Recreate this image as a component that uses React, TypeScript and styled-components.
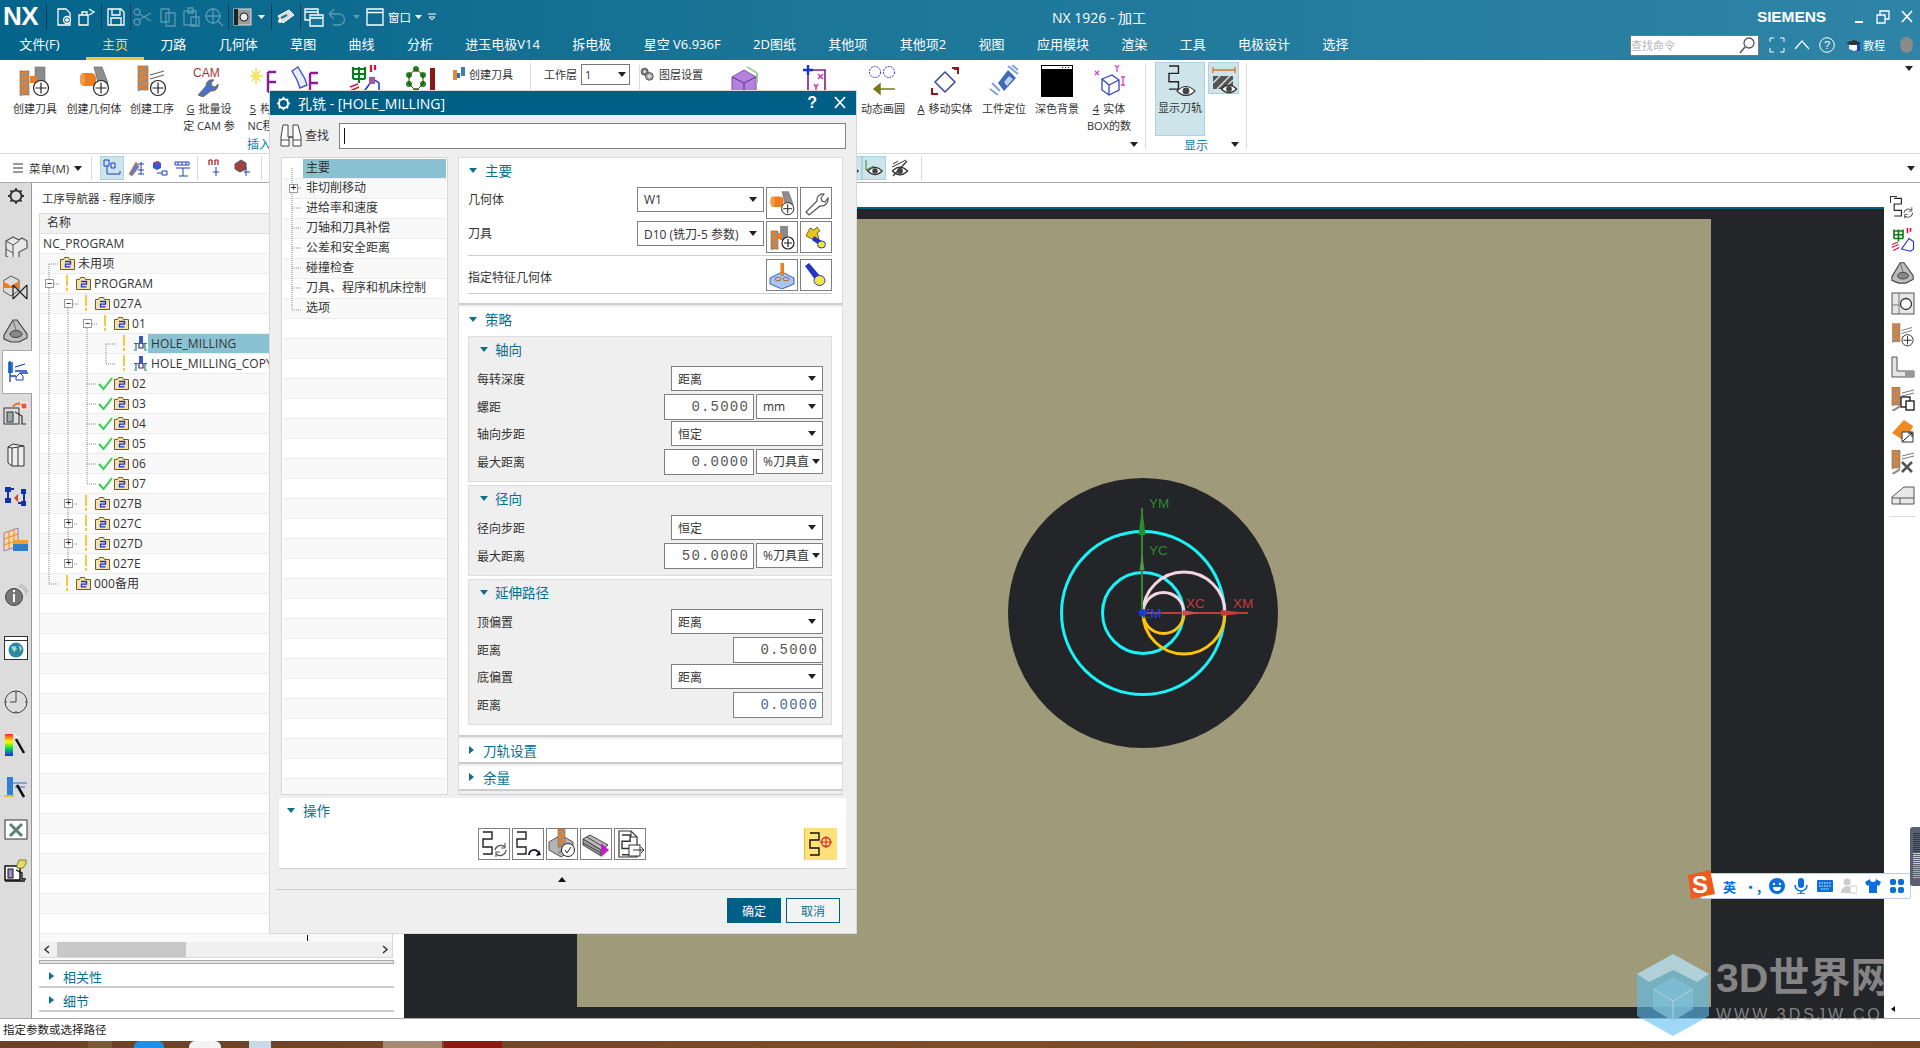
import React from 'react';
import styled, { createGlobalStyle } from 'styled-components';

const Global = createGlobalStyle`
  html, body { margin: 0; padding: 0; background: #fff; }
  body { font-family: "Open Sans", "Noto Sans CJK SC", sans-serif; font-size: 12px; color: #333; }
  * { box-sizing: border-box; }
`;

const TEAL = '#0c6f90';

/* ---------- drawing helpers ---------- */
type IP = { s?: number; w?: number; h?: number; vb?: string; children?: React.ReactNode };
const Ico = ({ s = 32, w, h, vb = '0 0 32 32', children }: IP) => (
  <svg width={w ?? s} height={h ?? s} viewBox={vb} style={{ display: 'block', flex: 'none' }} fill="none">{children}</svg>
);
const Drill = ({ x = 0, y = 4, h = 24, w = 11 }: { x?: number; y?: number; h?: number; w?: number }) => (
  <g>
    <rect x={x} y={y} width={w} height={h} fill="#e8802a" stroke="#8a5a30" strokeWidth=".6" />
    {[0, 1, 2, 3].map(i => (
      <path key={i} d={`M${x} ${y + 5 + i * 6}L${x + w} ${y + i * 6}v2.6L${x} ${y + 7.6 + i * 6}z`} fill="#8f8f8f" />
    ))}
  </g>
);
const Plus = ({ cx = 22, cy = 23, r = 7.5 }: { cx?: number; cy?: number; r?: number }) => (
  <g>
    <circle cx={cx} cy={cy} r={r} fill="#fff" stroke="#222" strokeWidth="1.2" />
    <path d={`M${cx - r + 2} ${cy}h${2 * r - 4}M${cx} ${cy - r + 2}v${2 * r - 4}`} stroke="#222" strokeWidth="1.2" />
  </g>
);
const Eye = ({ cx = 22, cy = 24, k = 1 }: { cx?: number; cy?: number; k?: number }) => (
  <g>
    <path d={`M${cx - 9 * k} ${cy}Q${cx} ${cy - 9 * k} ${cx + 9 * k} ${cy}Q${cx} ${cy + 9 * k} ${cx - 9 * k} ${cy}z`} fill="#fff" stroke="#333" strokeWidth="1.1" />
    <circle cx={cx} cy={cy} r={3.4 * k} fill="#444" />
  </g>
);
const Wave = ({ x = 4, y = 3, k = 1, c = '#222' }: { x?: number; y?: number; k?: number; c?: string }) => (
  <path d={`M${x} ${y}h${9 * k}v${7 * k}h-${9 * k}v${8 * k}h${9 * k}v${7 * k}h-${9 * k}`} stroke={c} strokeWidth="1.4" />
);
const E = ({ x = 16, y = 6, c = '#8d1c97' }: { x?: number; y?: number; c?: string }) => (
  <path d={`M${x} ${y}v20M${x} ${y}h8M${x} ${y + 10}h8M${x} ${y + 20}h8`} stroke={c} strokeWidth="2.4" />
);
const Geo = ({ p = false }: { p?: boolean }) => (
  <>
    <path d="M16 2l8 0 6 16-8 8z" fill="#8e8e8e" stroke="#555" strokeWidth=".6" />
    <rect x="2" y="8" width="16" height="13" rx="5" fill="#ed7d22" />
    <ellipse cx="4.5" cy="14.5" rx="2.6" ry="6.4" fill="#f59a45" />
    {p && <Plus cx={23} cy={23} />}
  </>
);

const FolderIco = () => (
  <Ico s={15} vb="0 0 15 15">
    <path d="M.5 3.5h3l1-2h4l1 2h5v10H.5z" fill="#f5e3a8" stroke="#6f5c1e" />
    <path d="M5 5.5h5.5v2.7H5.5v2.6h5" stroke="#1a2ee6" strokeWidth="1.3" />
  </Ico>
);
const OpIco = () => (
  <Ico s={15} vb="0 0 15 15">
    <rect x="6" y="0" width="4" height="7" fill="#3c55c8" />
    <path d="M1 7.5h13M3 8v5M12 8v5M1 14h3M11 14h3" stroke="#1b7d78" strokeWidth="1.2" />
    <path d="M6 8v4h4V8" stroke="#22306f" strokeWidth="1.2" />
  </Ico>
);
const Check = () => (
  <Ico s={15} vb="0 0 15 15"><path d="M1 8l4.5 5L14 2" stroke="#2fd24c" strokeWidth="2" /></Ico>
);
const Caret = () => <Ico w={8} h={5} vb="0 0 8 5"><path d="M0 0h8L4 5z" fill="#222" /></Ico>;
const CaretW = () => <Ico w={7} h={4} vb="0 0 7 4"><path d="M0 0h7L3.500 4z" fill="#fff" /></Ico>;

/* ---------- ribbon and strip icons ---------- */
const ic: Record<string, React.ReactNode> = {
  tool: <Ico><Drill x={1} y={6} h={24} w={9} /><path d="M16 2h10v18H16z" fill="#8b8b8b" stroke="#666" strokeWidth=".6" /><rect x="11" y="11" width="7" height="7" fill="#ed7d22" /><Plus cx={22} cy={23} /></Ico>,
  geom: <Ico><Geo p /></Ico>,
  oper: <Ico><Drill x={2} y={1} h={24} w={10} /><path d="M14 10l14-4M14 14l14-4M15 18h13" stroke="#666" strokeWidth="1.1" /><Plus cx={22} cy={23} /></Ico>,
  cam: <Ico><text x="0" y="12" fontFamily="Liberation Sans" fontSize="12" fill="#a33">CAM</text><path d="M5 30l8-9a6 6 0 0 1 8-6l-3 3 1 3 3 1 3-3a6 6 0 0 1-7 7l-8 6z" fill="#4b6ec9" stroke="#7a6a1e" strokeWidth=".8" /></Ico>,
  sun: <Ico><path d="M6 3v16M0 11h13M2 6l8 10M10 6l-8 10" stroke="#eedc55" strokeWidth="1.5" /><circle cx="6" cy="11" r="3" fill="#f5e65c" /><E x={18} y={7} /></Ico>,
  hand: <Ico><path d="M2 6l6-4 7 12 2 6-7 3-3-8z" fill="#e9edfa" stroke="#3d55c9" strokeWidth="1.4" /><E x={20} y={8} /></Ico>,
  tree: <Ico><path d="M4 4h12M4 9h12M4 14h12M10 2v16M4 2v12M16 2v12" stroke="#0b7d1b" strokeWidth="2.2" /><path d="M22 0v7M26 0v5" stroke="#d6113a" strokeWidth="2.2" /><path d="M1 22l8-3M1 26l9-4M3 30l8-4" stroke="#d6113a" strokeWidth="1.5" /><path d="M14 28l10-14 6 4v10l-4 3z" fill="#fff" stroke="#1630d8" strokeWidth="1.5" /><rect x="20" y="12" width="6" height="7" fill="#a2589c" /></Ico>,
  ring: <Ico><g fill="#1d8a22"><circle cx="10" cy="4" r="3" /><circle cx="3" cy="10" r="3" /><circle cx="17" cy="10" r="3" /><circle cx="3" cy="19" r="3" /><circle cx="17" cy="19" r="3" /><circle cx="10" cy="26" r="3" /></g><path d="M10 4L3 10v9l7 7 7-7v-9z" stroke="#4a2f0f" /><rect x="24" y="3" width="5" height="26" fill="#8b1717" /></Ico>,
  cube: <Ico><path d="M3 12l12-7 12 7v14l-12 7-12-7z" fill="#b482dd" stroke="#7c4ab2" /><path d="M3 12l12 6 12-6M15 18v14" stroke="#5d2f93" /><path d="M18 2l10 6M28 8v10" stroke="#9fc99a" strokeWidth="2" /></Ico>,
  frame: <Ico><path d="M8 5h17v24M8 5v24" stroke="#7d1d8a" strokeWidth="1.6" /><path d="M3 5h10M8 0v10" stroke="#1730d8" strokeWidth="2.4" /><path d="M18 9l5 5M23 9l-5 5" stroke="#cc35c0" strokeWidth="1.5" /><path d="M14 19l2 3 2-3M16 22v5" stroke="#cc35c0" strokeWidth="1.5" /></Ico>,
  dyn: <Ico><circle cx="8" cy="7" r="5.500" stroke="#2a2ae0" strokeDasharray="2 1" /><circle cx="22" cy="7" r="5.500" stroke="#2a2ae0" strokeDasharray="2 1" /><path d="M28 24H7M13 19l-6 5 6 5z" fill="#7c7a17" stroke="#7c7a17" strokeWidth="1.500" /></Ico>,
  move: <Ico><path d="M6 17L16 7l10 10-10 10z" fill="#fff" stroke="#3f4ca8" strokeWidth="1.6" strokeLinejoin="round" /><path d="M23 3h6v6M25 4l3 0M3 23v6h6" stroke="#8b1a1a" strokeWidth="2" /></Ico>,
  pos: <Ico><path d="M10 18L20 5l8 8-12 13z" fill="#3d69b5" /><path d="M16 17l5-6 4 3-6 7z" fill="#bcd0f0" /><path d="M2 24l8 6M4 18l8 8M20 1l10 8M24 0l6 5" stroke="#7ea4e0" strokeWidth="2" /></Ico>,
  dark: <Ico><rect x="0" y="0" width="32" height="32" fill="#000" /><rect x=".5" y=".5" width="31" height="4" fill="#fff" stroke="#000" /><path d="M24 2.500h1M27 2.500h1M21 2.500h1" stroke="#000" /></Ico>,
  box: <Ico><path d="M9 14l10-4 7 5v10l-10 5-7-5z" stroke="#3147c4" strokeWidth="1.3" fill="#fff" /><path d="M9 14l7 6 10-5M16 20v10" stroke="#3147c4" strokeWidth="1.3" /><path d="M2 6l4 4M6 6l-4 4M22 0l2 3 2-3M24 3v4M28 12h4M30 12v8M28 20h4" stroke="#e03fcc" strokeWidth="1.300" /></Ico>,
  path: <Ico w={34} h={34} vb="0 0 34 34"><Wave x={6} y={1} k={1.05} /><Eye cx={23} cy={26} k={1} /></Ico>,
  hatch: <Ico w={30} h={30} vb="0 0 30 30"><path d="M4 5h22M4 2v6M26 2v6" stroke="#e0722a" strokeWidth="1.300" /><rect x="4" y="11" width="20" height="13" fill="#555" /><path d="M4 18l7-7M8 24l13-13M15 24l9-9" stroke="#ddd" strokeWidth="1.500" /><Eye cx={20} cy={24} k={.85} /></Ico>,
  gears: <Ico s={14} vb="0 0 18 18"><circle cx="6" cy="6" r="4.500" fill="#888" stroke="#333" /><circle cx="6" cy="6" r="1.500" fill="#eee" /><circle cx="12" cy="12" r="5" fill="#aaa" stroke="#333" /><circle cx="12" cy="12" r="1.700" fill="#eee" /></Ico>,
  miniTool: <Ico s={14} vb="0 0 14 14"><rect x="1" y="3" width="4" height="10" fill="#e28b2e" /><rect x="5" y="6" width="3" height="5" fill="#2a6dc9" /><rect x="9" y="0" width="4" height="9" fill="#3c7fa8" /></Ico>,

  gear: <Ico s={18} vb="0 0 18 18"><circle cx="9" cy="9" r="5.500" stroke="#333" strokeWidth="2" /><path d="M9 1v3M9 14v3M1 9h3M14 9h3M3.500 3.500l2 2M12.500 12.500l2 2M3.500 14.500l2-2M12.500 5.500l2-2" stroke="#333" strokeWidth="1.800" /></Ico>,
  blocks: <Ico s={24} vb="0 0 24 24"><path d="M2 8l7-4 6 3 3-2 5 3v7l-8 4v5l-6 3-7-4z" fill="#e8e8e8" stroke="#555" strokeWidth="1.200" /><path d="M2 8l7 4 6-4M9 12v14M2 16l7 4" stroke="#555" /></Ico>,
  mcs: <Ico s={26} vb="0 0 26 26"><path d="M0 6l8-5 8 4v10l-8 6-8-5z" fill="#ddd" stroke="#555" /><path d="M0 6l8 5 8-5v7H0z" fill="#ed7d22" /><path d="M10 10l14 14M24 10L10 24M10 10v14M24 10v14" stroke="#222" fill="#fff" strokeWidth="1.200" /></Ico>,
  part: <Ico s={26} vb="0 0 26 26"><path d="M1 18l9-15h4l10 14v4l-8 4H8l-7-3z" fill="#bdbdbd" stroke="#444" strokeWidth="1.200" /><ellipse cx="13" cy="17" rx="6" ry="3.500" fill="#888" stroke="#444" /><path d="M10 3l3 10" stroke="#666" /></Ico>,
  nav: <Ico s={22} vb="0 0 22 22"><rect x="1" y="1" width="5" height="11" fill="#2f7ed8" /><path d="M3 0v21M3 15h6M8 6l10-3M8 10h12M13 12h8" stroke="#1a3ebd" strokeWidth="1.300" /><path d="M9 16l4-4 3 3v4H9z" stroke="#1a3ebd" /></Ico>,
  machine: <Ico s={26} vb="0 0 26 26"><rect x="1" y="6" width="15" height="16" fill="#ddd" stroke="#333" /><rect x="4" y="10" width="6" height="10" fill="#9aa" stroke="#333" /><path d="M12 10l7 4v8h4" stroke="#333" strokeWidth="1.200" /><path d="M10 5a6 6 0 0 1 8-3" stroke="#e0722a" strokeWidth="2" /><rect x="18" y="1" width="6" height="6" fill="#e53" stroke="#fff" /></Ico>,
  book: <Ico w={18} h={24} vb="0 0 18 24"><path d="M1 4l5-3 11 2v20H5l-4-3z" fill="#eee" stroke="#333" /><path d="M5 5v18M1 4l4 1 12-2" stroke="#333" /><path d="M11 4v19" stroke="#333" /></Ico>,
  seq: <Ico s={24} vb="0 0 24 24"><path d="M4 3v10M4 3h6M20 3v14M14 17h6" stroke="#1432a8" strokeWidth="2" /><rect x="1" y="1" width="6" height="5" fill="#1432a8" /><rect x="1" y="12" width="6" height="5" fill="#1432a8" /><rect x="17" y="3" width="5" height="5" fill="#1432a8" /><rect x="17" y="15" width="5" height="5" fill="#1432a8" /><path d="M10 12l4-4v8z" fill="#d44527" /></Ico>,
  table: <Ico s={26} vb="0 0 26 26"><path d="M1 6l14-5v18L1 24z" fill="#f6d9a9" stroke="#9a7bc0" /><path d="M1 12l14-5M1 18l14-5M6 4v18M11 2v18" stroke="#e88a2a" /><rect x="10" y="13" width="15" height="11" fill="#f0a030" /><rect x="10" y="17" width="15" height="7" fill="#2d7fc8" /></Ico>,
  info: <Ico s={24} vb="0 0 24 24"><circle cx="10" cy="14" r="8.500" fill="#777" stroke="#444" /><path d="M10 11v8" stroke="#fff" strokeWidth="2" /><circle cx="10" cy="8" r="1.200" fill="#fff" /><path d="M14 3a12 12 0 0 1 9 9M16 1a14 14 0 0 1 8 8" stroke="#aaa" /></Ico>,
  globe: <Ico s={24} vb="0 0 24 24"><rect x=".5" y=".5" width="23" height="23" fill="#fff" stroke="#333" /><path d="M1 4.500h22" stroke="#333" /><circle cx="12" cy="14" r="7.500" fill="#2d8aa5" /><path d="M7 11l4-1 2 3-3 3zM15 9l3 3-2 4z" fill="#a9d9c8" /></Ico>,
  clock: <Ico s={24} vb="0 0 24 24"><circle cx="12" cy="12" r="11" stroke="#444" /><path d="M12 3v9H6M12 1v2M12 21v2M1 12h2M21 12h2" stroke="#444" /></Ico>,
  rainbow: <Ico s={24} vb="0 0 24 24"><defs><linearGradient id="rb" x1="0" y1="0" x2="0" y2="1"><stop offset="0" stopColor="#f22" /><stop offset=".35" stopColor="#ff0" /><stop offset=".65" stopColor="#0d4" /><stop offset="1" stopColor="#22f" /></linearGradient></defs><rect x="1" y="1" width="8" height="22" fill="url(#rb)" /><path d="M12 6l8 14" stroke="#111" strokeWidth="2.500" /><path d="M11 1l2 4 3-2" stroke="#fff" /></Ico>,
  toolSel: <Ico s={24} vb="0 0 24 24"><rect x="3" y="2" width="6" height="18" fill="#2f7ed8" /><path d="M9 8h14M11 12h10" stroke="#2d62d8" strokeWidth="1.200" /><path d="M13 10l7 12" stroke="#111" strokeWidth="2.500" /><path d="M0 21h10" stroke="#d8c23c" strokeWidth="2" /></Ico>,
  wrenchBox: <Ico s={24} vb="0 0 24 24"><rect x="1" y="3" width="22" height="19" fill="#fff" stroke="#333" /><path d="M6 7l12 12M18 7L6 19" stroke="#5f7f77" strokeWidth="3" /></Ico>,
  machineFolder: <Ico s={24} vb="0 0 24 24"><rect x="1" y="8" width="15" height="14" fill="#fff" stroke="#111" strokeWidth="1.500" /><rect x="4" y="11" width="5" height="9" fill="#9c8cc0" stroke="#111" /><path d="M12 12l6 3v6h4M1 23h20" stroke="#111" strokeWidth="1.300" /><path d="M13 7l2-5h7v4l-3 4h-6z" fill="#e8d76a" stroke="#7b8a22" /></Ico>,

  reload: <Ico s={30} vb="0 0 30 30"><Wave x={4} y={3} k={1} /><path d="M16 21a6 6 0 0 1 10-3M27 21a6 6 0 0 1-10 4" stroke="#555" strokeWidth="1.300" /><path d="M26 14v5h-4M17 28v-5h4" stroke="#555" strokeWidth="1.100" /></Ico>,
  replay: <Ico s={30} vb="0 0 30 30"><Wave x={4} y={3} k={1} /><path d="M16 26a5 5 0 0 1 9-3" stroke="#112" strokeWidth="1.700" /><path d="M23 27l5-1-2-5z" fill="#112" /></Ico>,
  verify: <Ico s={30} vb="0 0 30 30"><path d="M2 13l12-7 12 7v8l-12 7-12-7z" fill="#b4b4b4" stroke="#555" /><Drill x={11} y={0} h={18} w={7} /><circle cx="21" cy="21" r="6.500" fill="#fff" stroke="#222" /><path d="M18 21l2 3 4-6" stroke="#222" /></Ico>,
  post: <Ico s={30} vb="0 0 30 30"><path d="M2 10l7-4 18 10-7 5z" fill="#bbb" stroke="#444" /><path d="M2 10v6l18 11v-6zM6 8l18 11M2 14l18 10" stroke="#444" fill="#999" /><path d="M20 14l8 7-8 7z" fill="#c31fc6" /></Ico>,
  docOut: <Ico s={30} vb="0 0 30 30"><path d="M4 2h12l6 6v20H4z" fill="#fff" stroke="#333" strokeWidth="1.200" /><path d="M16 2v6h6" stroke="#333" /><Wave x={7} y={6} k={.9} c="#333" /><rect x="14" y="16" width="11" height="11" fill="#fff" stroke="#333" /><path d="M18 21h11M26 18l3 3-3 3" stroke="#333" /></Ico>,
  target: <Ico s={26} vb="0 0 26 26"><Wave x={2} y={2} k={1} c="#111" /><circle cx="18" cy="11" r="4.500" stroke="#d8242a" strokeWidth="1.300" /><path d="M12 11h12M18 5v12" stroke="#d8242a" /></Ico>,
  wrench: <Ico s={26} vb="0 0 26 26"><path d="M3 22l11-11a6 6 0 0 1 7-7l-3 4 1 3 3 1 3-4a7 7 0 0 1-8 8L6 25z" fill="#fff" stroke="#555" strokeWidth="1.200" /></Ico>,
  tool2: <Ico s={26} vb="0 0 26 26"><Drill x={2} y={7} h={18} w={7} /><rect x="11" y="2" width="8" height="14" fill="#8b8b8b" /><rect x="9" y="9" width="4" height="6" fill="#ed7d22" /><Plus cx={19} cy={19} r={6} /></Ico>,
  lightKey: <Ico s={26} vb="0 0 26 26"><path d="M3 12l4-8 4 2 3-3 3 4-3 2 2 5-5 2z" fill="#e9c61d" stroke="#5b4d12" strokeWidth=".800" /><path d="M11 12l8 5-3 4-7-5z" fill="#2434c8" /><ellipse cx="18.500" cy="20.500" rx="4" ry="3.500" fill="#f1e447" stroke="#2434c8" /></Ico>,
  feature: <Ico s={28} vb="0 0 28 28"><path d="M2 17l12-6 12 6v6l-12 5-12-5z" fill="#a9c4ee" stroke="#3a62b8" /><ellipse cx="10" cy="18" rx="3" ry="1.800" stroke="#c0651c" /><ellipse cx="18" cy="18" rx="3" ry="1.800" stroke="#c0651c" /><rect x="12.500" y="2" width="3.500" height="13" fill="#ed7d22" /></Ico>,
  torch: <Ico s={26} vb="0 0 26 26"><path d="M2 4l4-3 12 14-5 4z" fill="#2434c8" /><ellipse cx="16.500" cy="18.500" rx="5.500" ry="5" fill="#f1e447" stroke="#2434c8" /></Ico>,
  r_green: <Ico s={24} vb="0 0 32 32"><path d="M4 4h12M4 9h12M4 14h12M10 2v16M4 2v12M16 2v12" stroke="#0b7d1b" strokeWidth="2.200" /><path d="M22 0v7M26 0v5" stroke="#d6113a" strokeWidth="2.200" /><path d="M1 22l8-3M1 26l9-4M3 30l8-4" stroke="#d6113a" strokeWidth="1.500" /><path d="M14 28l10-14 6 4v10l-4 3z" fill="#fff" stroke="#1630d8" strokeWidth="1.500" /></Ico>,
  r_bracket: <Ico s={24} vb="0 0 24 24"><rect x="1" y="2" width="22" height="21" fill="#e6e6e6" stroke="#555" /><path d="M8 2v21M1 14h7" stroke="#777" /><circle cx="15" cy="13" r="5.500" fill="#fff" stroke="#333" strokeWidth="1.300" /></Ico>,
  r_ell: <Ico s={24} vb="0 0 24 24"><path d="M1 2h5v14h17v6H1z" fill="#e4e4e4" stroke="#555" /><rect x="14" y="16" width="9" height="6" fill="#999" /></Ico>,
  r_copy: <Ico s={24} vb="0 0 24 24"><Drill x={1} y={0} h={18} w={8} /><path d="M11 6l12-3M11 9l12-3" stroke="#777" /><rect x="10" y="10" width="9" height="10" fill="#fff" stroke="#111" strokeWidth="1.300" /><rect x="15" y="14" width="8" height="9" fill="#fff" stroke="#111" strokeWidth="1.300" /></Ico>,
  r_fan: <Ico s={24} vb="0 0 24 24"><path d="M1 14L13 1l9 6-7 16z" fill="#ee8a20" /><path d="M11 13h11v10H11z" fill="#fff" stroke="#333" /><path d="M12 22l9-8M17 14h4v4" stroke="#111" /></Ico>,
  r_del: <Ico s={24} vb="0 0 24 24"><Drill x={1} y={0} h={18} w={8} /><path d="M11 6l12-3M11 9l12-3" stroke="#777" /><path d="M11 12l10 10M21 12L11 22" stroke="#555" strokeWidth="2.600" /></Ico>,
  r_wedge: <Ico s={24} vb="0 0 24 24"><path d="M1 15L13 5h10v17H1z" fill="#e8e8e8" stroke="#555" /><path d="M1 16h22M9 16v6" stroke="#555" /></Ico>,
  viewEye: <Ico s={20} vb="0 0 20 20"><path d="M2 2v10M2 12l8-4" stroke="#2a8a3c" /><path d="M2 12h9" stroke="#d22" /><Eye cx={11} cy={13} k={.8} /></Ico>,
  viewNo: <Ico s={20} vb="0 0 20 20"><Eye cx={10} cy={13} k={.85} /><path d="M3 6l5-3M2 9l14-7" stroke="#333" /><path d="M3 18L17 3" stroke="#333" strokeWidth="1.200" /></Ico>,
  sub1: <Ico s={18} vb="0 0 18 18"><path d="M1 1h5v6H1zM8 4h4v5H8z" stroke="#1a3ebd" /><path d="M4 7v8h8M12 15h5v-3" stroke="#1a3ebd" /></Ico>,
  sub2: <Ico s={18} vb="0 0 18 18"><path d="M1 15L8 3l3 5-7 9z" fill="#5b7fd0" stroke="#e0872a" /><path d="M13 3v12M10 5h6M10 11h6M10 15h6" stroke="#1a3ebd" /></Ico>,
  sub3: <Ico s={18} vb="0 0 18 18"><path d="M2 4l4-2 4 2v5l-4 2-4-2z" fill="#3854d8" /><path d="M3 3l3 2 2-3" stroke="#e33" /><path d="M11 12h5v4h-5z" stroke="#1a3ebd" /><path d="M11 14H6" stroke="#1a3ebd" /></Ico>,
  sub4: <Ico s={18} vb="0 0 18 18"><path d="M1 3h14M1 3v3h14V3M4 3v3M8 3v3M12 3v3" stroke="#1a3ebd" /><path d="M2 9h14M9 9v8M5 17h9" stroke="#1a3ebd" /></Ico>,
  sub5: <Ico s={18} vb="0 0 18 18"><path d="M1 1v5M4 1v5M7 1v5M10 1v5M1 1h3M7 1h3" stroke="#a81414" strokeWidth="1.200" /><path d="M8 8v9M5 13h6" stroke="#1a3ebd" /></Ico>,
  sub6: <Ico s={18} vb="0 0 18 18"><path d="M1 5l6-4 5 3v6l-6 3-5-3z" fill="#a14242" stroke="#555" /><path d="M12 8v9M10 13h6" stroke="#1a3ebd" /></Ico>,
};

/* ---------- shell ---------- */
const Page = styled.div`
  position: relative;
  width: 1920px;
  height: 1048px;
  overflow: hidden;
  display: flex;
  flex-direction: column;
  background: #fff;
`;
const Header = styled.header`
  height: 60px;
  flex: none;
  background: linear-gradient(90deg, #04648a 0%, #1a7597 40%, #2e84a6 100%);
  color: #fff;
`;
const TitleBar = styled.div`
  height: 33px;
  display: flex;
  align-items: center;
`;
const Logo = styled.div`
  width: 46px;
  padding-left: 3px;
  font: bold 26px "Liberation Sans", sans-serif;
  letter-spacing: -.5px;
`;
const QSep = styled.i<{ $ml?: number }>`
  width: 1px;
  height: 26px;
  margin-left: ${p => p.$ml ?? 0}px;
  background: rgba(0, 30, 50, .55);
`;
const QItem = styled.span<{ $ml: number; $dim?: boolean }>`
  margin-left: ${p => p.$ml}px;
  opacity: ${p => (p.$dim ? 0.32 : 1)};
  display: flex;
  align-items: center;
  font-size: 11.5px;
`;
const AppTitle = styled.div`
  margin-left: 616px;
  width: 110px;
  font-size: 14px;
  white-space: nowrap;
`;
const Brand = styled.div`
  margin-left: auto;
  font: bold 15.5px "Liberation Sans", sans-serif;
  letter-spacing: -.1px;
`;
const WinBtns = styled.div`
  display: flex;
  align-items: center;
  gap: 10px;
  margin: 0 6px 0 26px;
`;
const MenuBar = styled.nav`
  height: 27px;
  display: flex;
  align-items: stretch;
  padding-left: 3px;
  font-size: 13px;
`;
const MenuTab = styled.div<{ $active?: boolean; $mr?: number }>`
  padding: 0 16.2px;
  margin-right: ${p => p.$mr ?? 0}px;
  white-space: nowrap;
  line-height: 23px;
  color: ${p => (p.$active ? '#ffd75e' : '#fff')};
  border-bottom: 3px solid ${p => (p.$active ? '#f3c33a' : 'transparent')};
`;
const MenuRight = styled.div`
  margin-left: auto;
  display: flex;
  align-items: center;
  padding-right: 7px;
  height: 24px;
`;
const CmdSearch = styled.div`
  width: 129px;
  height: 21px;
  background: #fff;
  border: 1px solid #777;
  display: flex;
  align-items: center;
  justify-content: space-between;
  padding-right: 2px;
  color: #b5b5b5;
  font-size: 11px;
`;
const MenuIco = styled.span<{ $ml: number }>`
  margin-left: ${p => p.$ml}px;
  display: flex;
  align-items: center;
  font-size: 11px;
  gap: 2px;
`;
const Dot = styled.i`
  width: 13px;
  height: 16px;
  border-radius: 50%;
  background: #8a8a8a;
  margin-left: 15px;
`;

const Ribbon = styled.section`
  height: 94px;
  flex: none;
  display: flex;
  border-bottom: 1px solid #d8d8d8;
  font-size: 11px;
`;
const RGroup = styled.div<{ $w: number }>`
  width: ${p => p.$w}px;
  flex: none;
  display: flex;
  flex-direction: column;
  position: relative;
  margin: 2px 0 0;
`;
const RItems = styled.div<{ $pl?: number }>`
  display: flex;
  height: 74px;
  padding-left: ${p => p.$pl ?? 0}px;
`;
const RFooter = styled.div<{ $pr?: number }>`
  flex: 1;
  display: flex;
  align-items: center;
  justify-content: center;
  padding-right: ${p => p.$pr ?? 0}px;
  color: #0c7ea6;
  font-size: 12px;
  position: relative;
`;
const FootArrow = styled.span`
  position: absolute;
  right: 7px;
  top: 6px;
  display: flex;
`;
const RCol = styled.div<{ $w: number }>`
  width: ${p => p.$w}px;
  flex: none;
  display: flex;
  flex-direction: column;
  align-items: center;
  padding-top: 3px;
  text-align: center;
  white-space: nowrap;
`;
const RLabel = styled.div`
  margin-top: 3px;
  line-height: 17px;
  height: 34px;
  color: #333;
`;
const U = styled.span`
  text-decoration: underline;
  margin-right: 4px;
`;
const RSep = styled.i<{ $h?: number; $ml?: number }>`
  width: 1px;
  height: ${p => p.$h ?? 86}px;
  margin: 3px 0 0 ${p => p.$ml ?? 0}px;
  background: #dcdcdc;
  flex: none;
`;
const RSmall = styled.div<{ $ml: number; $gap?: number }>`
  margin: 1px 0 0 ${p => p.$ml}px;
  height: 22px;
  display: flex;
  align-items: center;
  gap: ${p => p.$gap ?? 3}px;
  white-space: nowrap;
  flex: none;
`;
const LayerBox = styled.div`
  width: 49px;
  height: 21px;
  border: 1px solid #777;
  margin-left: 1px;
  padding: 0 3px;
  display: flex;
  align-items: center;
  justify-content: space-between;
`;
const RActive = styled.div<{ $h: number; $w: number; $ml: number }>`
  width: ${p => p.$w}px;
  height: ${p => p.$h}px;
  margin: 0 0 0 ${p => p.$ml}px;
  background: #cde5ea;
  border: 1px solid #aad3dd;
  display: flex;
  flex-direction: column;
  align-items: center;
  justify-content: flex-start;
  padding-top: 2px;
  white-space: nowrap;
  flex: none;
`;

const SubBar = styled.section`
  height: 29px;
  flex: none;
  display: flex;
  align-items: center;
  border-bottom: 1px solid #aaa;
  padding-right: 5px;
  font-size: 11.5px;
`;
const SItem = styled.span<{ $ml: number; $on?: boolean }>`
  margin-left: ${p => p.$ml}px;
  display: flex;
  align-items: center;
  justify-content: center;
  ${p => p.$on && 'background:#cde5ea; outline:1px solid #aad3dd; height:22px; width:22px;'}
`;
const SSep = styled.i<{ $ml: number }>`
  margin-left: ${p => p.$ml}px;
  width: 1px;
  height: 24px;
  background: #d8d8d8;
`;
const SpaceFill = styled.i`
  flex: 1;
`;

const Main = styled.main`
  flex: 1;
  min-height: 0;
  display: flex;
`;
const Strip = styled.aside`
  width: 32px;
  flex: none;
  background: #dcdcdc;
  border-right: 1px solid #999;
  display: flex;
  flex-direction: column;
`;
const StripCell = styled.div<{ $gap: number; $h: number; $on?: boolean }>`
  margin-top: ${p => p.$gap}px;
  height: ${p => p.$h}px;
  flex: none;
  display: flex;
  align-items: center;
  justify-content: center;
  ${p => p.$on && 'background:#fff; margin-left:2px; margin-right:-1px; border:1px solid #aaa; border-right:0;'}
`;
const NavPanel = styled.div`
  width: 372px;
  flex: none;
  display: flex;
  flex-direction: column;
  padding-left: 7px;
`;
const NavTitle = styled.div`
  height: 30px;
  flex: none;
  padding: 8px 0 0 3px;
  font-size: 11.5px;
  line-height: 15px;
`;
const NavTable = styled.div`
  width: 354px;
  height: 745px;
  flex: none;
  border: 1px solid #d8d8d8;
  display: flex;
  flex-direction: column;
  position: relative;
`;
const THead = styled.div`
  height: 20px;
  flex: none;
  padding-left: 7px;
  line-height: 18px;
  background: #f1f1f1;
  border-bottom: 1px solid #e0e0e0;
  font-size: 12px;
`;
const TBody = styled.div`
  height: 708px;
  flex: none;
  overflow: hidden;
  position: relative;
`;
const TreeLines = styled.svg`
  position: absolute;
  left: 0;
  top: 0;
  width: 352px;
  height: 400px;
  z-index: 1;
  pointer-events: none;
`;
const Row = styled.div<{ $alt: boolean; $pad?: number }>`
  height: 20px;
  display: flex;
  align-items: center;
  padding: 0 0 1px ${p => p.$pad ?? 0}px;
  background: ${p => (p.$alt ? '#f9f9f9' : '#fff')};
  border-bottom: 1px solid #ececec;
  white-space: nowrap;
  font-size: 12px;
`;
const ExpSlot = styled.span`
  width: 15px;
  flex: none;
  display: flex;
`;
const ExpBox = styled.span`
  width: 9px;
  height: 9px;
  border: 1px solid #9a9a9a;
  background: #fff;
  position: relative;
  z-index: 2;
  font: 10px/7px "Liberation Mono", monospace;
  text-align: center;
  color: #111;
`;
const StatusSlot = styled.span`
  width: 14px;
  flex: none;
  margin-right: 2px;
  display: flex;
  justify-content: center;
  position: relative;
  z-index: 2;
`;
const Warn = styled.i`
  width: 2px;
  height: 16px;
  background: linear-gradient(#f9c63f 0 11px, transparent 11px 13px, #f9c63f 13px);
`;
const RowLabel = styled.span<{ $sel?: boolean }>`
  flex: 1;
  padding-left: 3px;
  line-height: 19px;
  letter-spacing: .1px;
  color: #333;
  background: ${p => (p.$sel ? '#8bc2d3' : 'transparent')};
`;
const Tick = styled.i`
  position: absolute;
  left: 267px;
  top: 701px;
  width: 1px;
  height: 6px;
  background: #111;
`;
const ScrollBar = styled.div`
  height: 15px;
  flex: none;
  display: flex;
  align-items: center;
  justify-content: space-between;
  background: #f0f0f0;
  position: relative;
`;
const Thumb = styled.i`
  position: absolute;
  left: 17px;
  top: 0;
  width: 129px;
  height: 15px;
  background: #c8c8c8;
`;
const GrayBar = styled.div`
  width: 355px;
  height: 4px;
  margin-top: 2px;
  background: #e4e4e4;
  border: 1px solid #aaa;
  flex: none;
`;
const FootSec = styled.div`
  width: 355px;
  height: 24px;
  flex: none;
  display: flex;
  align-items: center;
  gap: 9px;
  padding: 2px 0 0 10px;
  color: ${TEAL};
  font-size: 13px;
  border-bottom: 2px solid #ccc;
`;
const Tri = styled.i`
  width: 0;
  height: 0;
  border-top: 4.5px solid transparent;
  border-bottom: 4.5px solid transparent;
  border-left: 5px solid ${TEAL};
  flex: none;
`;
const TriD = styled.i`
  width: 0;
  height: 0;
  border-left: 4.5px solid transparent;
  border-right: 4.5px solid transparent;
  border-top: 5px solid ${TEAL};
  flex: none;
`;

const View = styled.div`
  flex: 1;
  min-width: 0;
  display: flex;
  flex-direction: column;
`;
const ViewTop = styled.div`
  height: 24px;
  flex: none;
  border-bottom: 2px solid #005f87;
  box-sizing: content-box;
`;
const Dark = styled.div`
  flex: 1;
  background: #242529;
  padding: 10px 173px 11px 173px;
  display: flex;
`;
const Sheet = styled.div`
  flex: 1;
  background: #9f9a79;
  position: relative;
`;
const SceneSvg = styled.svg`
  position: absolute;
  left: 0;
  top: 0;
  width: 100%;
  height: 100%;
`;
const RightBar = styled.aside`
  width: 36px;
  flex: none;
  display: flex;
  flex-direction: column;
  align-items: center;
  padding: 13px 0 0 1px;
  gap: 7.800px;
  position: relative;
`;
const RightRule = styled.i`
  width: 27px;
  height: 1px;
  background: #ddd;
  margin-top: 2px;
`;
const Corner = styled.i`
  position: absolute;
  left: 6px;
  top: 13px;
  width: 7px;
  height: 7px;
  border-left: 1px solid #333;
  border-top: 1px solid #333;
`;
const SideMark = styled.i`
  position: absolute;
  left: 7px;
  bottom: 6px;
  border-top: 3px solid transparent;
  border-bottom: 3px solid transparent;
  border-right: 4px solid #111;
`;

const Status = styled.footer`
  height: 23px;
  flex: none;
  border-top: 1px solid #aaa;
  padding-left: 3px;
  line-height: 21px;
  font-size: 11.5px;
  color: #222;
`;
const Task = styled.div`
  height: 7px;
  flex: none;
  background: linear-gradient(90deg, #6a4228, #7c4c2b 50%, #754728);
  display: flex;
  overflow: hidden;
`;
const TaskChip = styled.i<{ $ml: number; $w: number; $c: string; $r?: number }>`
  margin-left: ${p => p.$ml}px;
  width: ${p => p.$w}px;
  height: 12px;
  background: ${p => p.$c};
  border-radius: ${p => p.$r ?? 0}px;
  flex: none;
`;

/* ---------- dialog ---------- */
const Dialog = styled.div`
  position: absolute;
  left: 270px;
  top: 91px;
  width: 586px;
  height: 842px;
  background: #efefef;
  box-shadow: 0 0 0 1px #d8d8d8;
  display: flex;
  flex-direction: column;
  z-index: 5;
`;
const DlgTitle = styled.div`
  height: 24px;
  flex: none;
  background: #005f87;
  color: #fff;
  display: flex;
  align-items: center;
  padding: 0 9px 0 6px;
  font-size: 14px;
  gap: 7px;
`;
const DlgBtn = styled.span<{ $ml?: string }>`
  margin-left: ${p => p.$ml ?? '0'};
  font: bold 16px "Liberation Sans", sans-serif;
  display: flex;
`;
const SearchRow = styled.div`
  height: 42px;
  flex: none;
  display: flex;
  align-items: flex-start;
  padding: 8px 10px 0 9px;
  gap: 1px;
`;
const SearchLabel = styled.span`
  width: 33px;
  line-height: 26px;
  font-size: 12px;
`;
const SearchInput = styled.div`
  flex: 1;
  height: 26px;
  background: #fff;
  border: 1px solid #808080;
  padding: 4px 4px;
`;
const CaretLine = styled.i`
  display: block;
  width: 1px;
  height: 16px;
  background: #111;
`;
const DlgBody = styled.div`
  display: flex;
  height: 638px;
  flex: none;
  padding-left: 11px;
`;
const DTree = styled.div`
  width: 167px;
  flex: none;
  background: #fff;
  border: 1px solid #d8d8d8;
  padding: 1px 1px 0;
  overflow: hidden;
  position: relative;
`;
const DRow = styled.div<{ $alt: boolean }>`
  height: 20px;
  display: flex;
  align-items: center;
  background: ${p => (p.$alt ? '#f9f9f9' : '#fff')};
  border-bottom: 1px solid #ececec;
  padding-left: 5px;
`;
const DExp = styled.span`
  width: 15px;
  flex: none;
  padding-left: 1px;
  display: flex;
`;
const DLabel = styled.span<{ $sel?: boolean }>`
  flex: 1;
  height: 19px;
  line-height: 18px;
  padding-left: 3px;
  font-size: 12px;
  white-space: nowrap;
  background: ${p => (p.$sel ? '#8bc2d3' : 'transparent')};
`;
const DPane = styled.div`
  width: 385px;
  flex: none;
  margin-left: 10px;
  border: 1px solid #dcdcdc;
  border-bottom-color: #d0d0d0;
  background: #efefef;
  display: flex;
  flex-direction: column;
`;
const Sec = styled.div`
  background: #fff;
  padding: 0 10px 0 9px;
  border-bottom: 2px solid #ccc;
  margin-bottom: 2px;
`;
const SecHead = styled.div<{ $h: number }>`
  height: ${p => p.$h}px;
  display: flex;
  align-items: center;
  gap: 8px;
  padding: 0 0 5px 1px;
  color: ${TEAL};
  font-size: 13.5px;
`;
const TopRow = styled.div<{ $h: number; $line?: boolean }>`
  height: ${p => p.$h}px;
  display: flex;
  align-items: flex-start;
  gap: 2px;
  ${p => p.$line && 'border-top:1px solid #ccc; border-bottom:1px solid #ccc; padding-top:3px;'}
`;
const TopLabel = styled.span<{ $mt: number }>`
  flex: 1;
  margin-top: ${p => p.$mt}px;
  font-size: 12px;
`;
const Sel = styled.div<{ $w: number }>`
  width: ${p => p.$w}px;
  height: 25px;
  flex: none;
  background: #fff;
  border: 1px solid #7f7f7f;
  display: flex;
  align-items: center;
  justify-content: space-between;
  padding: 0 6px;
  font-size: 12px;
  white-space: nowrap;
  overflow: hidden;
  gap: 3px;
`;
const IconBtn = styled.div`
  width: 32px;
  height: 32px;
  flex: none;
  background: #fff;
  border: 1px solid #7f7f7f;
  display: flex;
  align-items: center;
  justify-content: center;
`;
const Box = styled.div`
  background: #efefef;
  border: 1px solid #dcdcdc;
  margin-bottom: 3px;
  padding: 0 8px 5px;
`;
const BoxHead = styled.div`
  height: 29px;
  display: flex;
  align-items: center;
  gap: 7px;
  padding: 0 0 5px 3px;
  color: ${TEAL};
  font-size: 13.500px;
`;
const Field = styled.div`
  height: 27.500px;
  display: flex;
  align-items: flex-start;
  gap: 2px;
`;
const FieldLabel = styled.span`
  flex: 1;
  margin-top: 4px;
  font-size: 12px;
`;
const Num = styled.div<{ $c?: string }>`
  width: 90px;
  height: 26px;
  flex: none;
  background: #fff;
  border: 1px solid #7f7f7f;
  padding-right: 4px;
  text-align: right;
  font: 14px/24px "Liberation Mono", monospace;
  letter-spacing: 1.200px;
  color: ${p => p.$c ?? '#555'};
`;
const SecEnd = styled.div<{ $h: number }>`
  height: ${p => p.$h}px;
`;
const Collapsed = styled.div`
  height: 25px;
  background: #fff;
  border-bottom: 2px solid #ccc;
  margin-bottom: 2px;
  display: flex;
  align-items: center;
  gap: 9px;
  padding: 0 0 2px 10px;
  color: ${TEAL};
  font-size: 13.500px;
`;
const ActionSec = styled.div`
  margin: 3px 10px 0 9px;
  height: 71px;
  flex: none;
  background: #fff;
  border-bottom: 1px solid #ccc;
  padding: 0 9px 0 8px;
`;
const ActionHead = styled.div`
  height: 27px;
  display: flex;
  align-items: center;
  gap: 8px;
  padding-bottom: 3px;
  color: ${TEAL};
  font-size: 13.500px;
`;
const ActionRow = styled.div`
  height: 32px;
  margin-top: 3px;
  display: flex;
  gap: 2px;
  padding-left: 191px;
`;
const YellowBtn = styled.div`
  margin-left: auto;
  width: 33px;
  height: 32px;
  background: #ffe07a;
  border-left: 1px solid #e8c040;
  display: flex;
  align-items: center;
  justify-content: center;
`;
const Collapse = styled.div`
  height: 21px;
  margin: 0 1px 0 5px;
  border-bottom: 1px solid #ccc;
  display: flex;
  align-items: center;
  justify-content: center;
  padding-right: 6px;
  flex: none;
`;
const UpTri = styled.i`
  border-left: 4.500px solid transparent;
  border-right: 4.500px solid transparent;
  border-bottom: 5px solid #111;
`;
const DlgFoot = styled.div`
  flex: 1;
  display: flex;
  justify-content: flex-end;
  gap: 5px;
  padding: 8px 16px 0 0;
`;
const OkBtn = styled.div<{ $primary?: boolean }>`
  width: 54px;
  height: 25px;
  border: 1px solid #005f87;
  background: ${p => (p.$primary ? '#005f87' : '#f3f3f3')};
  color: ${p => (p.$primary ? '#fff' : '#0c6f90')};
  display: flex;
  align-items: center;
  justify-content: center;
  font-size: 12px;
`;

/* ---------- overlays ---------- */
const Watermark = styled.div`
  position: absolute;
  left: 1637px;
  top: 953px;
  width: 247px;
  height: 84px;
  overflow: hidden;
  display: flex;
  z-index: 3;
  pointer-events: none;
`;
const WmText = styled.div`
  margin-left: 7px;
  color: rgba(170, 170, 170, .72);
  white-space: nowrap;
  font: bold 41px/50px "Liberation Sans", "Noto Sans CJK SC", sans-serif;
`;
const WmSub = styled.div`
  font: 16px/16px "Liberation Sans", sans-serif;
  letter-spacing: 3px;
  margin-top: 4px;
`;
const Sogou = styled.div`
  position: absolute;
  left: 1700px;
  top: 873px;
  width: 211px;
  height: 26px;
  z-index: 4;
  background: #fff;
  border: 1px solid #b6cfe8;
  border-radius: 2px;
  display: flex;
  align-items: center;
  gap: 8px;
  padding-left: 22px;
  color: #0a6fdc;
  font: bold 13px "Noto Sans CJK SC", sans-serif;
`;
const SogouLogo = styled.div`
  position: absolute;
  left: 1685px;
  top: 869px;
  z-index: 5;
`;
const Meter = styled.div`
  position: absolute;
  left: 1910px;
  top: 827px;
  width: 12px;
  height: 59px;
  border-radius: 3px 0 0 3px;
  z-index: 5;
  background: #5b6070;
  padding: 6px 2px 0 3px;
  display: flex;
  flex-direction: column;
  gap: 1px;
`;
const MeterBar = styled.i<{ $c: string }>`
  height: 1px;
  background: ${p => p.$c};
  flex: none;
`;

/* ---------- data ---------- */
const stripDefs: { k: string; c: number; h?: number; on?: boolean }[] = [
  { k: 'gear', c: 196 }, { k: 'blocks', c: 245 }, { k: 'mcs', c: 288 }, { k: 'part', c: 330 },
  { k: 'nav', c: 372, h: 44, on: true }, { k: 'machine', c: 415 }, { k: 'book', c: 455 }, { k: 'seq', c: 498 },
  { k: 'table', c: 540 }, { k: 'info', c: 595 }, { k: 'globe', c: 648 }, { k: 'clock', c: 702 },
  { k: 'rainbow', c: 745 }, { k: 'toolSel', c: 787 }, { k: 'wrenchBox', c: 829 }, { k: 'machineFolder', c: 870 },
];
const stripCells = (() => {
  let y = 183;
  return stripDefs.map(d => {
    const h = d.h ?? 30;
    const top = d.c - h / 2;
    const gap = top - y;
    y = top + h;
    return { ...d, h, gap };
  });
})();

type TR = { t: string; l?: number; exp?: '+' | '-'; st?: 'w' | 'c'; ic?: 'f' | 'o'; sel?: boolean; pad?: number };
const treeRows: TR[] = [
  { t: 'NC_PROGRAM', pad: 0 },
  { t: '未用项', pad: 20, ic: 'f' },
  { t: 'PROGRAM', l: 0, exp: '-', st: 'w', ic: 'f' },
  { t: '027A', l: 1, exp: '-', st: 'w', ic: 'f' },
  { t: '01', l: 2, exp: '-', st: 'w', ic: 'f' },
  { t: 'HOLE_MILLING', l: 3, st: 'w', ic: 'o', sel: true },
  { t: 'HOLE_MILLING_COPY', l: 3, st: 'w', ic: 'o' },
  ...['02', '03', '04', '05', '06', '07'].map(t => ({ t, l: 2, st: 'c' as const, ic: 'f' as const })),
  ...['027B', '027C', '027D', '027E'].map(t => ({ t, l: 1, exp: '+' as const, st: 'w' as const, ic: 'f' as const })),
  { t: '000备用', l: 0, st: 'w', ic: 'f' },
];
const allRows: TR[] = [...treeRows, ...Array.from({ length: 36 - treeRows.length }, () => ({ t: '' }))];
const dTree = ['主要', '非切削移动', '进给率和速度', '刀轴和刀具补偿', '公差和安全距离', '碰撞检查', '刀具、程序和机床控制', '选项'];
const dRows = [...dTree, ...Array.from({ length: 24 }, () => '')];
const rightIcons = ['reload', 'r_green', 'part', 'r_bracket', 'oper', 'r_ell', 'r_copy', 'r_fan', 'r_del', 'r_wedge'];
const menus = ['主页', '刀路', '几何体', '草图', '曲线', '分析', '进玉电极V14', '拆电极', '星空 V6.936F', '2D图纸', '其他项', '其他项2', '视图', '应用模块', '渲染', '工具', '电极设计', '选择'];

const R = ({ name, w, a, b, u }: { name: string; w: number; a?: string; b?: string; u?: string }) => (
  <RCol $w={w}>
    {ic[name]}
    <RLabel>{u && <U>{u}</U>}{a}<br />{b}</RLabel>
  </RCol>
);

const stroke = { stroke: '#fff', strokeWidth: 1.3 };

export default function App() {
  return (
    <Page>
      <Global />
      <Header>
        <TitleBar>
          <Logo>NX</Logo>
          <QSep />
          <QItem $ml={7}><Ico s={20} vb="0 0 20 20"><path d="M4 2h8l4 4v12H4z" {...stroke} /><circle cx="13" cy="13" r="3.500" fill="#1a7597" {...stroke} /><path d="M11 13h4M13 11v4" {...stroke} /></Ico></QItem>
          <QItem $ml={3}><Ico s={20} vb="0 0 20 20"><path d="M2 8h9v10H2zM5 8V5h5v3M12 2l5 3-5 3" {...stroke} /></Ico></QItem>
          <QSep $ml={4} />
          <QItem $ml={4}><Ico s={20} vb="0 0 20 20"><path d="M2 2h13l3 3v13H2z" {...stroke} /><path d="M6 2v6h8V2M5 18v-7h10v7" {...stroke} /></Ico></QItem>
          <QSep $ml={4} />
          <QItem $ml={2} $dim><Ico s={20} vb="0 0 20 20"><circle cx="4" cy="5" r="3" {...stroke} /><circle cx="4" cy="15" r="3" {...stroke} /><path d="M6 7l12 7M6 13l12-7" {...stroke} /></Ico></QItem>
          <QItem $ml={5} $dim><Ico s={20} vb="0 0 20 20"><path d="M3 2h8v13H3zM8 6h9v13H8z" {...stroke} /></Ico></QItem>
          <QItem $ml={3} $dim><Ico s={20} vb="0 0 20 20"><path d="M3 4h12v14H3zM7 1h5v5H7zM10 10h8v9h-8z" {...stroke} /></Ico></QItem>
          <QItem $ml={3} $dim><Ico s={20} vb="0 0 20 20"><circle cx="9" cy="9" r="7" {...stroke} /><path d="M9 1v16M1 9h16M14 14l5 5" {...stroke} /></Ico></QItem>
          <QSep $ml={4} />
          <QItem $ml={4}><Ico s={20} vb="0 0 20 20"><rect x="1" y="2" width="17" height="16" fill="#999" stroke="#ddd" /><circle cx="11" cy="10" r="4" fill="#eee" stroke="#222" /><rect x="1" y="2" width="4" height="16" fill="#222" /></Ico></QItem>
          <QItem $ml={5}><CaretW /></QItem>
          <QSep $ml={6} />
          <QItem $ml={4}><Ico s={20} vb="0 0 20 20"><path d="M2 9l11-6 5 5-11 8z" fill="#ddd" stroke="#fff" /><path d="M5 11l6-3" stroke="#1a7597" strokeWidth="2" /><circle cx="4" cy="14" r="2" fill="#fff" /></Ico></QItem>
          <QSep $ml={4} />
          <QItem $ml={3}><Ico s={20} vb="0 0 20 20"><path d="M1 2h13v11H1zM1 5h13" {...stroke} /><path d="M6 8h13v11H6zM6 11h13" fill="#1a7597" {...stroke} /></Ico></QItem>
          <QItem $ml={3} $dim><Ico s={20} vb="0 0 20 20"><path d="M2 7h10a5 5 0 0 1 0 11H6M2 7l5-5M2 7l5 5" {...stroke} /></Ico></QItem>
          <QItem $ml={6} $dim><CaretW /></QItem>
          <QItem $ml={5}><Ico s={20} vb="0 0 20 20"><path d="M2 2h16v16H2zM2 5.500h16" {...stroke} /></Ico></QItem>
          <QItem $ml={3}>窗口</QItem>
          <QItem $ml={4}><CaretW /></QItem>
          <QItem $ml={6}><Ico w={8} h={8} vb="0 0 8 8"><path d="M0 1h8M1 4h6l-3 3z" stroke="#fff" /></Ico></QItem>
          <AppTitle>NX 1926 - 加工</AppTitle>
          <Brand>SIEMENS</Brand>
          <WinBtns>
            <Ico s={14} vb="0 0 14 14"><path d="M3 12h8" stroke="#fff" strokeWidth="2" /></Ico>
            <Ico s={14} vb="0 0 14 14"><path d="M1 5h8v8H1zM4 5V1h9v8H9" stroke="#fff" strokeWidth="1.300" /></Ico>
            <Ico s={14} vb="0 0 14 14"><path d="M2 1l10 11M12 1L2 12" stroke="#fff" strokeWidth="1.700" /></Ico>
          </WinBtns>
        </TitleBar>
        <MenuBar>
          <MenuTab $mr={10}>文件(F)</MenuTab>
          {menus.map((m, i) => <MenuTab key={m} $active={i === 0}>{m}</MenuTab>)}
          <MenuRight>
            <CmdSearch>查找命令
              <Ico s={18} vb="0 0 18 18"><circle cx="11" cy="7" r="5" stroke="#555" strokeWidth="1.300" /><path d="M7 11l-5 6" stroke="#555" strokeWidth="1.600" /></Ico>
            </CmdSearch>
            <MenuIco $ml={10}><Ico s={16} vb="0 0 16 16"><path d="M1 5V1h4M11 1h4v4M15 11v4h-4M5 15H1v-4" stroke="#fff" /></Ico></MenuIco>
            <MenuIco $ml={9}><Ico s={16} vb="0 0 16 16"><path d="M1 12l7-8 7 8" stroke="#fff" strokeWidth="1.200" /></Ico></MenuIco>
            <MenuIco $ml={9}><Ico s={16} vb="0 0 16 16"><circle cx="8" cy="8" r="7.300" stroke="#fff" /><text x="8" y="12" textAnchor="middle" fontSize="11" fill="#fff" fontFamily="Liberation Sans">?</text></Ico></MenuIco>
            <MenuIco $ml={11}>
              <Ico s={15} vb="0 0 15 15"><path d="M0 5l8-3 7 3-7 3z" fill="#333" /><path d="M3 7v4l5 2 3-1V7" fill="#fff" /><path d="M11 6v7h3V6" fill="#1d3eb0" /></Ico>
              教程
            </MenuIco>
            <Dot />
          </MenuRight>
        </MenuBar>
      </Header>

      <Ribbon>
        <RGroup $w={530}>
          <RItems $pl={8}>
            <R name="tool" w={54} a="创建刀具" />
            <R name="geom" w={64} a="创建几何体" />
            <R name="oper" w={52} a="创建工序" />
            <R name="cam" w={62} u="G" a="批量设" b="定 CAM 参" />
            <R name="sun" w={52} u="5" a="构建" b="NC程序" />
            <R name="hand" w={28} />
            <R name="tree" w={90} />
            <R name="ring" w={24} />
            <RSmall $ml={18}>{ic.miniTool}创建刀具</RSmall>
          </RItems>
          <RFooter $pr={12}>插入<FootArrow><Caret /></FootArrow></RFooter>
        </RGroup>
        <RSep />
        <RGroup $w={614}>
          <RItems>
            <RSmall $ml={13}>工作层<LayerBox>1<Caret /></LayerBox></RSmall>
            <RSep $h={50} $ml={9} />
            <RSmall $ml={0} $gap={5}>{ic.gears}图层设置</RSmall>
            <R name="cube" w={83} />
            <R name="frame" w={60} />
            <R name="dyn" w={74} a="动态画圆" />
            <R name="move" w={50} u="A" a="移动实体" />
            <R name="pos" w={68} a="工件定位" />
            <R name="dark" w={38} a="深色背景" />
            <R name="box" w={66} u="4" a="实体" b="BOX的数" />
          </RItems>
          <RFooter><FootArrow><Caret /></FootArrow></RFooter>
        </RGroup>
        <RSep />
        <RGroup $w={100}>
          <RItems>
            <RActive $w={50} $h={74} $ml={9}>{ic.path}<span>显示刀轨</span></RActive>
            <RActive $w={31} $h={32} $ml={3}>{ic.hatch}</RActive>
          </RItems>
          <RFooter>显示<FootArrow><Caret /></FootArrow></RFooter>
        </RGroup>
        <RSep />
        <RFooter><FootArrow><Caret /></FootArrow></RFooter>
      </Ribbon>

      <SubBar>
        <SItem $ml={12}><Ico s={12} vb="0 0 12 12"><path d="M1 2h10M1 6h10M1 10h10" stroke="#333" /></Ico></SItem>
        <SItem $ml={5}>菜单(M)</SItem>
        <SItem $ml={5}><Caret /></SItem>
        <SSep $ml={9} />
        <SItem $ml={9} $on>{ic.sub1}</SItem>
        <SItem $ml={5}>{ic.sub2}</SItem>
        <SItem $ml={5}>{ic.sub3}</SItem>
        <SItem $ml={5}>{ic.sub4}</SItem>
        <SSep $ml={5} />
        <SItem $ml={10}>{ic.sub5}</SItem>
        <SItem $ml={8}>{ic.sub6}</SItem>
        <SSep $ml={9} />
        <SItem $ml={577} $on>{ic.viewEye}</SItem>
        <SItem $ml={2} $on>{ic.viewEye}</SItem>
        <SItem $ml={5}>{ic.viewNo}</SItem>
        <SSep $ml={11} />
        <SpaceFill />
        <SItem $ml={0}><Caret /></SItem>
      </SubBar>

      <Main>
        <Strip>
          {stripCells.map(c => (
            <StripCell key={c.k} $gap={c.gap} $h={c.h} $on={c.on}>{ic[c.k]}</StripCell>
          ))}
        </Strip>
        <NavPanel>
          <NavTitle>工序导航器 - 程序顺序</NavTitle>
          <NavTable>
            <THead>名称</THead>
            <TBody>
              <TreeLines viewBox="0 0 352 400">
                <g stroke="#888" strokeDasharray="1 1" fill="none">
                  <path d="M9 30V350M9 30h10M9 350h10" />
                  <path d="M28 70V330M28 270h9M28 290h9M28 310h9M28 330h9M14 50h6" />
                  <path d="M47 90V250M47 150h9M47 170h9M47 190h9M47 210h9M47 230h9M47 250h9M33 70h6" />
                  <path d="M66 110V130M66 110h9M66 130h9M52 90h6" />
                </g>
              </TreeLines>
              {allRows.map((r, i) => (
                <Row key={i} $alt={i % 2 === 1} $pad={r.pad ?? (r.l !== undefined ? 5 + 19 * r.l : 0)}>
                  {r.l !== undefined && <ExpSlot>{r.exp && <ExpBox>{r.exp === '+' ? '+' : '–'}</ExpBox>}</ExpSlot>}
                  {r.st && <StatusSlot>{r.st === 'w' ? <Warn /> : <Check />}</StatusSlot>}
                  {r.ic === 'f' && <FolderIco />}
                  {r.ic === 'o' && <OpIco />}
                  <RowLabel $sel={r.sel}>{r.t}</RowLabel>
                </Row>
              ))}
              <Tick />
            </TBody>
            <ScrollBar>
              <Thumb />
              <Ico s={15} vb="0 0 15 15"><path d="M9 4L5 7.500 9 11" stroke="#333" strokeWidth="1.500" /></Ico>
              <Ico s={15} vb="0 0 15 15"><path d="M6 4l4 3.500L6 11" stroke="#333" strokeWidth="1.500" /></Ico>
            </ScrollBar>
          </NavTable>
          <GrayBar />
          <FootSec><Tri />相关性</FootSec>
          <FootSec><Tri />细节</FootSec>
        </NavPanel>
        <View>
          <ViewTop />
          <Dark>
            <Sheet>
              <SceneSvg viewBox="0 0 1134 788" preserveAspectRatio="none">
                <circle cx="566" cy="394" r="135" fill="#242529" />
                <g fill="none" strokeWidth="3">
                  <circle cx="566" cy="394" r="81.500" stroke="#19f2f6" />
                  <circle cx="566" cy="394" r="40.500" stroke="#19f2f6" />
                  <path d="M566 394A40.500 40.500 0 0 1 648 394" stroke="#f6d5e2" />
                  <path d="M566 394A20.500 20.500 0 0 1 607 394" stroke="#f6d5e2" />
                  <path d="M566 394A41 41 0 0 0 648 394" stroke="#ffc20e" />
                  <path d="M566 394A20.500 20.500 0 0 0 607 394" stroke="#ffc20e" />
                </g>
                <path d="M565 394V289" stroke="#2f8a2f" strokeWidth="2" />
                <path d="M565 288l-3.500 28h7z" fill="#2f8a2f" />
                <path d="M565 335l-2.500 16h5z" fill="#4f9a4a" />
                <path d="M566 394H671" stroke="#c23a3a" strokeWidth="2" />
                <path d="M671 394l-27-3v6z" fill="#c23a3a" />
                <path d="M622 394l-16-3v6z" fill="#c85050" />
                <circle cx="565" cy="394" r="3.500" fill="#1238d8" />
                <g fontFamily="Liberation Sans" fontSize="13.500">
                  <text x="572" y="289" fill="#2f8a2f">YM</text>
                  <text x="572" y="336" fill="#2f8a2f">YC</text>
                  <text x="609" y="389" fill="#c23a3a">XC</text>
                  <text x="656" y="389" fill="#c23a3a">XM</text>
                  <text x="565" y="399" fill="#1a48e8">ZM</text>
                </g>
              </SceneSvg>
            </Sheet>
          </Dark>
        </View>
        <RightBar>
          <Corner />
          {rightIcons.map(k => <span key={k}>{React.cloneElement(ic[k] as React.ReactElement<IP>, { s: 24, w: 24, h: 24 })}</span>)}
          <RightRule />
          <SideMark />
        </RightBar>
      </Main>

      <Status>指定参数或选择路径</Status>
      <Task>
        <TaskChip $ml={88} $w={24} $c="#7b5a3a" />
        <TaskChip $ml={22} $w={30} $c="#1f90e8" $r={12} />
        <TaskChip $ml={25} $w={32} $c="#f3f3f3" $r={8} />
        <TaskChip $ml={28} $w={22} $c="#c9d9e8" />
        <TaskChip $ml={112} $w={59} $c="#a98a74" />
        <TaskChip $ml={2} $w={58} $c="#8c1a14" />
      </Task>

      <Dialog>
        <DlgTitle>
          <Ico s={15} vb="0 0 18 18"><circle cx="9" cy="9" r="5.500" stroke="#fff" strokeWidth="2.400" /><path d="M9 1v3M9 14v3M1 9h3M14 9h3M3.500 3.500l2 2M12.500 12.500l2 2M3.500 14.500l2-2M12.500 5.500l2-2" stroke="#fff" strokeWidth="2" /></Ico>
          <span>孔铣 - [HOLE_MILLING]</span>
          <DlgBtn $ml="auto">?</DlgBtn>
          <DlgBtn $ml="9px"><Ico s={14} vb="0 0 14 14"><path d="M2 1l10 11M12 1L2 12" stroke="#fff" strokeWidth="1.700" /></Ico></DlgBtn>
        </DlgTitle>
        <SearchRow>
          <Ico w={25} h={24} vb="0 0 25 24"><path d="M2 14l2-12h5v12h5V2h5l3 12v9h-8v-9h-4v9H2z" fill="#fff" stroke="#444" /><path d="M2 17h8M14 17h8" stroke="#444" /></Ico>
          <SearchLabel>查找</SearchLabel>
          <SearchInput><CaretLine /></SearchInput>
        </SearchRow>
        <DlgBody>
          <DTree>
            <TreeLines viewBox="0 0 352 400">
              <path d="M10 10V152M10 30h9M10 50h9M10 70h9M10 90h9M10 110h9M10 130h9M10 152h9" stroke="#888" strokeDasharray="1 1" fill="none" />
            </TreeLines>
            {dRows.map((t, i) => (
              <DRow key={i} $alt={i % 2 === 1}>
                <DExp>{i === 1 && <ExpBox>+</ExpBox>}</DExp>
                <DLabel $sel={i === 0}>{t}</DLabel>
              </DRow>
            ))}
          </DTree>
          <DPane>
            <Sec>
              <SecHead $h={29}><TriD />主要</SecHead>
              <TopRow $h={34}>
                <TopLabel $mt={3}>几何体</TopLabel>
                <Sel $w={127}>W1<Caret /></Sel>
                <IconBtn><Ico s={26}><Geo p /></Ico></IconBtn>
                <IconBtn>{ic.wrench}</IconBtn>
              </TopRow>
              <TopRow $h={34}>
                <TopLabel $mt={3}>刀具</TopLabel>
                <Sel $w={127}>D10 (铣刀-5 参数)<Caret /></Sel>
                <IconBtn>{ic.tool2}</IconBtn>
                <IconBtn>{ic.lightKey}</IconBtn>
              </TopRow>
              <TopRow $h={39} $line>
                <TopLabel $mt={9}>指定特征几何体</TopLabel>
                <IconBtn>{ic.feature}</IconBtn>
                <IconBtn>{ic.torch}</IconBtn>
              </TopRow>
              <SecEnd $h={9} />
            </Sec>
            <Sec>
              <SecHead $h={29}><TriD />策略</SecHead>
              <Box>
                <BoxHead><TriD />轴向</BoxHead>
                <Field><FieldLabel>每转深度</FieldLabel><Sel $w={152}>距离<Caret /></Sel></Field>
                <Field><FieldLabel>螺距</FieldLabel><Num>0.5000</Num><Sel $w={67}>mm<Caret /></Sel></Field>
                <Field><FieldLabel>轴向步距</FieldLabel><Sel $w={152}>恒定<Caret /></Sel></Field>
                <Field><FieldLabel>最大距离</FieldLabel><Num>0.0000</Num><Sel $w={67}>%刀具直<Caret /></Sel></Field>
              </Box>
              <Box>
                <BoxHead><TriD />径向</BoxHead>
                <Field><FieldLabel>径向步距</FieldLabel><Sel $w={152}>恒定<Caret /></Sel></Field>
                <Field><FieldLabel>最大距离</FieldLabel><Num>50.0000</Num><Sel $w={67}>%刀具直<Caret /></Sel></Field>
              </Box>
              <Box>
                <BoxHead><TriD />延伸路径</BoxHead>
                <Field><FieldLabel>顶偏置</FieldLabel><Sel $w={152}>距离<Caret /></Sel></Field>
                <Field><FieldLabel>距离</FieldLabel><Num>0.5000</Num></Field>
                <Field><FieldLabel>底偏置</FieldLabel><Sel $w={152}>距离<Caret /></Sel></Field>
                <Field><FieldLabel>距离</FieldLabel><Num $c="#4a6a90">0.0000</Num></Field>
              </Box>
              <SecEnd $h={7} />
            </Sec>
            <Collapsed><Tri />刀轨设置</Collapsed>
            <Collapsed><Tri />余量</Collapsed>
          </DPane>
        </DlgBody>
        <ActionSec>
          <ActionHead><TriD />操作</ActionHead>
          <ActionRow>
            <IconBtn>{ic.reload}</IconBtn>
            <IconBtn>{ic.replay}</IconBtn>
            <IconBtn>{ic.verify}</IconBtn>
            <IconBtn>{ic.post}</IconBtn>
            <IconBtn>{ic.docOut}</IconBtn>
            <YellowBtn>{ic.target}</YellowBtn>
          </ActionRow>
        </ActionSec>
        <Collapse><UpTri /></Collapse>
        <DlgFoot>
          <OkBtn $primary>确定</OkBtn>
          <OkBtn>取消</OkBtn>
        </DlgFoot>
      </Dialog>

      <Watermark>
        <Ico w={72} h={84} vb="0 0 72 84">
          <path d="M36 1l36 20v42L36 83 0 63V21z" fill="#5cc0f0" fillOpacity=".6" />
          <path d="M36 1l36 20-12 8-24-12-24 12L0 21z" fill="#e0ecea" fillOpacity=".55" />
          <path d="M36 24l20 12v20L36 68 16 56V36z" fill="#7fc0d8" fillOpacity=".75" />
          <path d="M16 36l20 12 20-12M36 48v20" stroke="#b8d0d4" fill="none" />
        </Ico>
        <WmText>3D世界网<WmSub>WWW.3DSJW.COM</WmSub></WmText>
      </Watermark>

      <SogouLogo>
        <Ico s={31} vb="0 0 31 31">
          <path d="M3 6l22-5 5 24-24 5z" fill="#f0591f" />
          <text x="15" y="24" textAnchor="middle" fontSize="24" fontWeight="700" fill="#fff" fontFamily="Liberation Sans">S</text>
        </Ico>
      </SogouLogo>
      <Sogou>
        <span>英</span>
        <span>•,</span>
        <Ico s={16} vb="0 0 16 16"><circle cx="8" cy="8" r="8" fill="#0a6fdc" /><circle cx="5" cy="6" r="1.200" fill="#fff" /><circle cx="11" cy="6" r="1.200" fill="#fff" /><path d="M4 9h8a4 4 0 0 1-8 0z" fill="#fff" /></Ico>
        <Ico s={16} vb="0 0 16 16"><rect x="5" y="0" width="6" height="10" rx="3" fill="#0a6fdc" /><path d="M2 7a6 6 0 0 0 12 0M8 13v3M4 16h8" stroke="#0a6fdc" strokeWidth="1.500" /></Ico>
        <Ico s={16} vb="0 0 16 16"><rect x="0" y="2" width="16" height="12" rx="1" fill="#0a6fdc" /><path d="M2 5h12M2 8h12M4 11h8" stroke="#fff" strokeDasharray="1.500 1" /></Ico>
        <Ico s={16} vb="0 0 16 16"><circle cx="6" cy="4" r="3.500" fill="#ccc" /><path d="M0 15c0-8 10-8 10-4v4z" fill="#ccc" /><rect x="9" y="8" width="7" height="7" fill="#fff" stroke="#ccc" /></Ico>
        <Ico s={16} vb="0 0 16 16"><path d="M5 1L0 4l2 4 2-1v8h8V7l2 1 2-4-5-3a3 3 0 0 1-6 0z" fill="#0a6fdc" /></Ico>
        <Ico s={16} vb="0 0 16 16"><g fill="#0a6fdc"><rect x="1" y="1" width="6" height="6" rx="2" /><rect x="9" y="1" width="6" height="6" rx="2" /><rect x="1" y="9" width="6" height="6" rx="2" /><rect x="9" y="9" width="6" height="6" rx="2" /></g></Ico>
      </Sogou>
      <Meter>
        {Array.from({ length: 23 }, (_, i) => (
          <MeterBar key={i} $c={i < 10 ? '#333840' : i < 16 ? '#c8e060' : '#58d8b0'} />
        ))}
      </Meter>
    </Page>
  );
}
